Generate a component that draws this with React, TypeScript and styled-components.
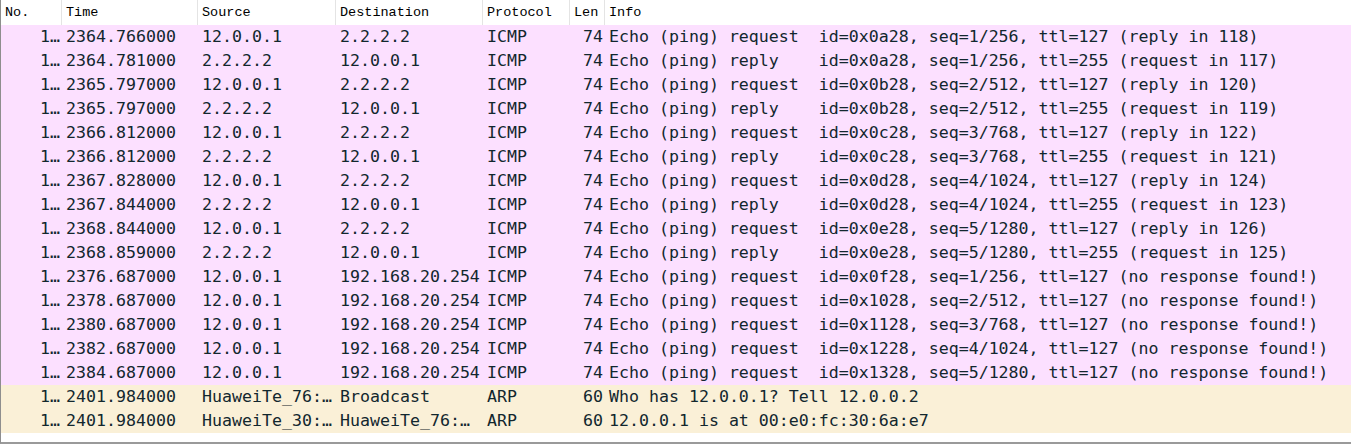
import React from 'react';
import styled, { createGlobalStyle } from 'styled-components';

const GlobalStyle = createGlobalStyle`
  html, body {
    margin: 0;
    padding: 0;
    background: #ffffff;
  }
`;

const COLUMNS = '61px 136px 138px 147px 87px 35px 1fr';

const PacketList = styled.div`
  width: 1351px;
  height: 444px;
  box-sizing: border-box;
  border-left: 1px solid #8e8e8e;
  border-bottom: 2px solid #9a9a9a;
  background: #ffffff;
  overflow: hidden;
`;

const HeaderRow = styled.div`
  display: grid;
  grid-template-columns: ${COLUMNS};
  height: 25px;
  background: #ffffff;
`;

const HeaderCell = styled.div`
  border-right: 1px solid #e4e4e4;
  padding-left: 4px;
  font-family: "Liberation Mono", "DejaVu Sans Mono", monospace;
  font-size: 13.5px;
  line-height: 26px;
  color: #000000;
  white-space: nowrap;
  overflow: hidden;

  &:last-child {
    border-right: none;
  }
`;

const Row = styled.div<{ bg: string }>`
  display: grid;
  grid-template-columns: ${COLUMNS};
  height: 24px;
  background: ${props => props.bg};
`;

const Cell = styled.div<{ right?: boolean }>`
  font-family: "DejaVu Sans Mono", "Liberation Mono", monospace;
  font-size: 16.6px;
  line-height: 24px;
  color: #12272e;
  white-space: pre;
  overflow: hidden;
  text-align: ${props => (props.right ? 'right' : 'left')};
  padding: ${props => (props.right ? '0 2px 0 0' : '0 0 0 4px')};
`;

type Packet = {
  time: string;
  src: string;
  dst: string;
  proto: 'ICMP' | 'ARP';
  len: number;
  info: string;
};

const packets: Packet[] = [
  { time: '2364.766000', src: '12.0.0.1', dst: '2.2.2.2', proto: 'ICMP', len: 74, info: 'Echo (ping) request  id=0x0a28, seq=1/256, ttl=127 (reply in 118)' },
  { time: '2364.781000', src: '2.2.2.2', dst: '12.0.0.1', proto: 'ICMP', len: 74, info: 'Echo (ping) reply    id=0x0a28, seq=1/256, ttl=255 (request in 117)' },
  { time: '2365.797000', src: '12.0.0.1', dst: '2.2.2.2', proto: 'ICMP', len: 74, info: 'Echo (ping) request  id=0x0b28, seq=2/512, ttl=127 (reply in 120)' },
  { time: '2365.797000', src: '2.2.2.2', dst: '12.0.0.1', proto: 'ICMP', len: 74, info: 'Echo (ping) reply    id=0x0b28, seq=2/512, ttl=255 (request in 119)' },
  { time: '2366.812000', src: '12.0.0.1', dst: '2.2.2.2', proto: 'ICMP', len: 74, info: 'Echo (ping) request  id=0x0c28, seq=3/768, ttl=127 (reply in 122)' },
  { time: '2366.812000', src: '2.2.2.2', dst: '12.0.0.1', proto: 'ICMP', len: 74, info: 'Echo (ping) reply    id=0x0c28, seq=3/768, ttl=255 (request in 121)' },
  { time: '2367.828000', src: '12.0.0.1', dst: '2.2.2.2', proto: 'ICMP', len: 74, info: 'Echo (ping) request  id=0x0d28, seq=4/1024, ttl=127 (reply in 124)' },
  { time: '2367.844000', src: '2.2.2.2', dst: '12.0.0.1', proto: 'ICMP', len: 74, info: 'Echo (ping) reply    id=0x0d28, seq=4/1024, ttl=255 (request in 123)' },
  { time: '2368.844000', src: '12.0.0.1', dst: '2.2.2.2', proto: 'ICMP', len: 74, info: 'Echo (ping) request  id=0x0e28, seq=5/1280, ttl=127 (reply in 126)' },
  { time: '2368.859000', src: '2.2.2.2', dst: '12.0.0.1', proto: 'ICMP', len: 74, info: 'Echo (ping) reply    id=0x0e28, seq=5/1280, ttl=255 (request in 125)' },
  { time: '2376.687000', src: '12.0.0.1', dst: '192.168.20.254', proto: 'ICMP', len: 74, info: 'Echo (ping) request  id=0x0f28, seq=1/256, ttl=127 (no response found!)' },
  { time: '2378.687000', src: '12.0.0.1', dst: '192.168.20.254', proto: 'ICMP', len: 74, info: 'Echo (ping) request  id=0x1028, seq=2/512, ttl=127 (no response found!)' },
  { time: '2380.687000', src: '12.0.0.1', dst: '192.168.20.254', proto: 'ICMP', len: 74, info: 'Echo (ping) request  id=0x1128, seq=3/768, ttl=127 (no response found!)' },
  { time: '2382.687000', src: '12.0.0.1', dst: '192.168.20.254', proto: 'ICMP', len: 74, info: 'Echo (ping) request  id=0x1228, seq=4/1024, ttl=127 (no response found!)' },
  { time: '2384.687000', src: '12.0.0.1', dst: '192.168.20.254', proto: 'ICMP', len: 74, info: 'Echo (ping) request  id=0x1328, seq=5/1280, ttl=127 (no response found!)' },
  { time: '2401.984000', src: 'HuaweiTe_76:…', dst: 'Broadcast', proto: 'ARP', len: 60, info: 'Who has 12.0.0.1? Tell 12.0.0.2' },
  { time: '2401.984000', src: 'HuaweiTe_30:…', dst: 'HuaweiTe_76:…', proto: 'ARP', len: 60, info: '12.0.0.1 is at 00:e0:fc:30:6a:e7' },
];

const rowColors: Record<Packet['proto'], string> = {
  ICMP: '#fce0ff',
  ARP: '#faf0d7',
};

const headers = ['No.', 'Time', 'Source', 'Destination', 'Protocol', 'Len', 'Info'];

export default function App() {
  return (
    <>
      <GlobalStyle />
      <PacketList>
        <HeaderRow>
          {headers.map(h => (
            <HeaderCell key={h}>{h}</HeaderCell>
          ))}
        </HeaderRow>
        {packets.map((p, i) => (
          <Row key={i} bg={rowColors[p.proto]}>
            <Cell right>1…</Cell>
            <Cell>{p.time}</Cell>
            <Cell>{p.src}</Cell>
            <Cell>{p.dst}</Cell>
            <Cell>{p.proto}</Cell>
            <Cell right>{p.len}</Cell>
            <Cell>{p.info}</Cell>
          </Row>
        ))}
      </PacketList>
    </>
  );
}
